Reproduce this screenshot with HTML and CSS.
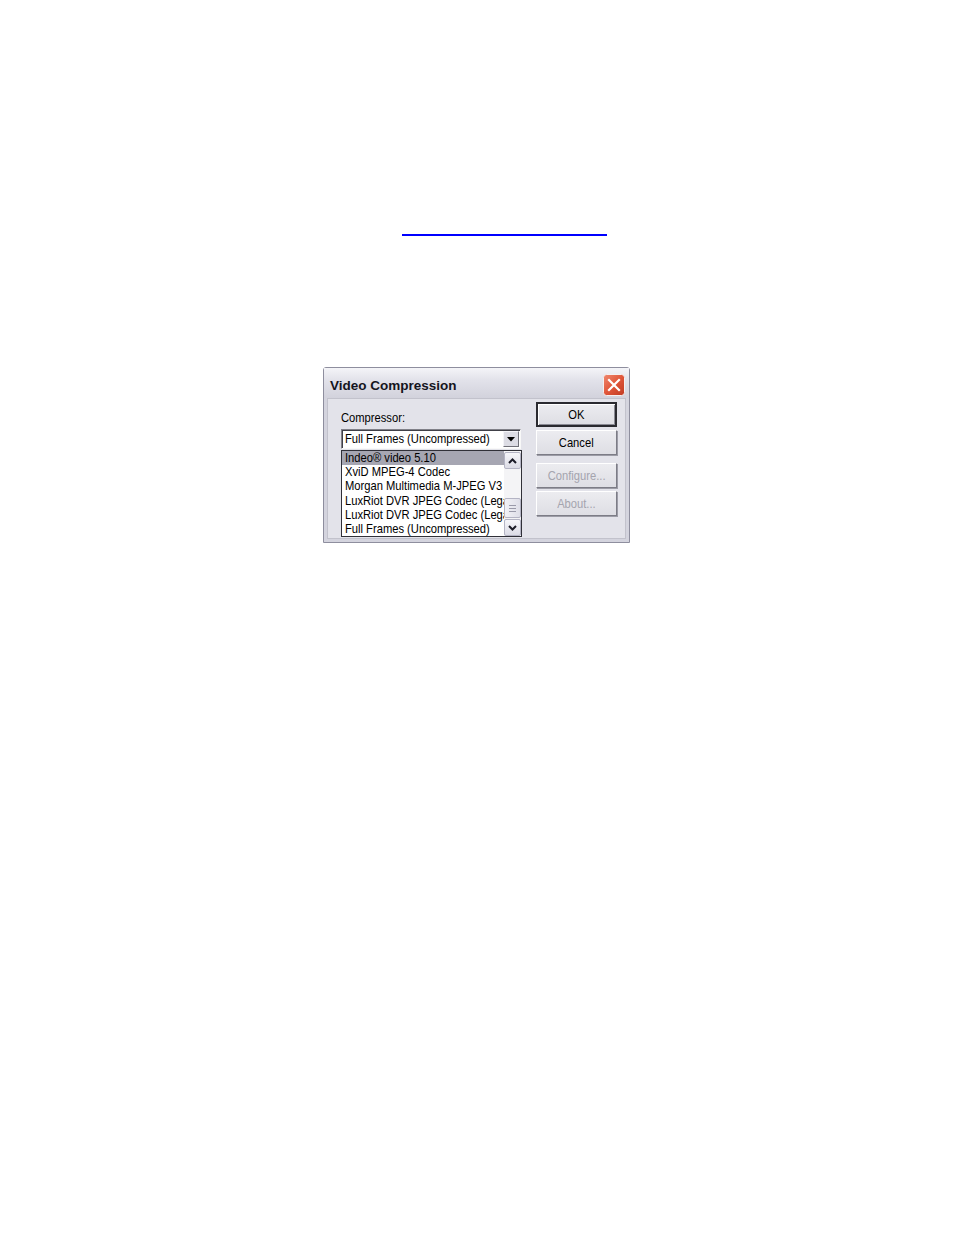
FILE: index.html
```html
<!DOCTYPE html>
<html>
<head>
<meta charset="utf-8">
<title>Video Compression</title>
<link rel="stylesheet" href="styles.css">
</head>
<body>
<div class="rule"></div>
<div class="dialog">
  <div class="titlebar">
    <span class="title">Video Compression</span>
    <span class="close">
      <svg width="22" height="22" viewBox="0 0 22 22">
        <defs>
          <linearGradient id="rg" x1="0" y1="0" x2="1" y2="1">
            <stop offset="0" stop-color="#f08a70"/>
            <stop offset="0.5" stop-color="#e0563a"/>
            <stop offset="1" stop-color="#c03a22"/>
          </linearGradient>
        </defs>
        <rect x="0.5" y="0.5" width="21" height="21" rx="3" fill="url(#rg)" stroke="#f4f0f0" stroke-width="1"/>
        <path d="M6 6 L16 16 M16 6 L6 16" stroke="#ffffff" stroke-width="2.2" stroke-linecap="square"/>
      </svg>
    </span>
  </div>
  <div class="body">
    <div class="left">
      <div class="label"><span class="t">Compressor:</span></div>
      <div class="combo">
        <span class="combo-text"><span class="t">Full Frames (Uncompressed)</span></span>
        <span class="combo-btn">
          <svg width="8" height="5" viewBox="0 0 8 5"><path d="M0 0 H8 L4 4.5 Z" fill="#000"/></svg>
        </span>
      </div>
      <div class="list">
        <div class="items">
          <div class="row sel"><span class="t">Indeo® video 5.10</span></div>
          <div class="row"><span class="t">XviD MPEG-4 Codec</span></div>
          <div class="row"><span class="t">Morgan Multimedia M-JPEG V3</span></div>
          <div class="row"><span class="t">LuxRiot DVR JPEG Codec (Legacy)</span></div>
          <div class="row"><span class="t">LuxRiot DVR JPEG Codec (Legacy)</span></div>
          <div class="row"><span class="t">Full Frames (Uncompressed)</span></div>
        </div>
        <div class="scroll">
          <div class="sbtn">
            <svg width="9" height="6" viewBox="0 0 9 6"><path d="M1 5 L4.5 1.5 L8 5" fill="none" stroke="#1c1c28" stroke-width="2"/></svg>
          </div>
          <div class="track">
            <div class="thumb">
              <span class="grip"></span><span class="grip"></span><span class="grip"></span>
            </div>
          </div>
          <div class="sbtn">
            <svg width="9" height="6" viewBox="0 0 9 6"><path d="M1 1 L4.5 4.5 L8 1" fill="none" stroke="#1c1c28" stroke-width="2"/></svg>
          </div>
        </div>
      </div>
    </div>
    <div class="right">
      <div class="btn default"><span class="t">OK</span></div>
      <div class="btn"><span class="t">Cancel</span></div>
      <div class="btn disabled gap"><span class="t">Configure...</span></div>
      <div class="btn disabled"><span class="t">About...</span></div>
    </div>
  </div>
</div>
</body>
</html>
```

FILE: styles.css
```css
body {
  margin: 0;
  background: #ffffff;
  font-family: "Liberation Sans", Arial, sans-serif;
  color: #000;
}

.t {
  display: inline-block;
  white-space: nowrap;
  transform: scaleX(0.86);
  transform-origin: left center;
}

.rule {
  margin: 234px 0 0 402px;
  width: 205px;
  height: 2px;
  background: #0000ff;
}

.dialog {
  margin: 131px 0 0 323px;
  width: 307px;
  height: 176px;
  box-sizing: border-box;
  border: 1px solid #8e8e9e;
  border-radius: 3px 3px 0 0;
  background: #d4d4de;
  display: flex;
  flex-direction: column;
}

.titlebar {
  height: 30px;
  flex: none;
  display: flex;
  justify-content: space-between;
  align-items: center;
  padding: 0 4px 0 6px;
  background: linear-gradient(#f4f4f8 0%, #e2e2ea 40%, #d2d2dc 100%);
}

.title {
  font-weight: bold;
  font-size: 13.5px;
  color: #141420;
  padding-top: 5px;
}

.close {
  width: 22px;
  height: 22px;
  align-self: flex-end;
  margin-bottom: 2px;
}

.close svg {
  display: block;
}

.body {
  flex: 1;
  margin: 0 3px 3px;
  background: #e3e3ea;
  border: 1px solid #c2c2cc;
  display: flex;
  gap: 14px;
  padding: 3px 0 0 13px;
}

.left {
  width: 181px;
  display: flex;
  flex-direction: column;
}

.label {
  margin-top: 8px;
  font-size: 13px;
  line-height: 15px;
  height: 15px;
}

.combo {
  margin-top: 4px;
  width: 180px;
  height: 20px;
  box-sizing: border-box;
  border: 1px solid;
  border-color: #808088 #f8f8f8 #f8f8f8 #808088;
  box-shadow: inset 1px 1px 0 #404048;
  background: #ffffff;
  display: flex;
  align-items: center;
  justify-content: space-between;
  padding-left: 3px;
  overflow: hidden;
}

.combo-text {
  font-size: 13px;
  line-height: 16px;
  flex: 1;
  overflow: hidden;
}

.combo-btn {
  flex: none;
  width: 16px;
  height: 16px;
  box-sizing: border-box;
  border: 1px solid;
  border-color: #f4f4f8 #707078 #707078 #f4f4f8;
  background: #dcdce4;
  display: flex;
  align-items: center;
  justify-content: center;
  margin-right: 1px;
}

.combo-btn svg {
  display: block;
}

.list {
  margin-top: 1px;
  width: 181px;
  height: 87px;
  box-sizing: border-box;
  border: 1px solid #303038;
  background: #ffffff;
  display: flex;
}

.items {
  width: 162px;
  overflow: hidden;
}

.row {
  height: 14.2px;
  line-height: 14.2px;
  font-size: 13px;
  padding-left: 3px;
  white-space: nowrap;
  overflow: hidden;
}

.row.sel {
  background: #a6a6b2;
}

.scroll {
  width: 17px;
  display: flex;
  flex-direction: column;
  background: #f4f4f6;
  padding-top: 1px;
}

.sbtn {
  height: 17px;
  box-sizing: border-box;
  border: 1px solid #b4b4c4;
  border-radius: 2px;
  background: linear-gradient(#f6f6fa, #dcdce6);
  display: flex;
  align-items: center;
  justify-content: center;
}

.sbtn svg {
  display: block;
}

.track {
  flex: 1;
  display: flex;
  flex-direction: column;
  justify-content: flex-end;
  padding-bottom: 1px;
}

.thumb {
  height: 20px;
  box-sizing: border-box;
  border: 1px solid #b4b4c4;
  border-radius: 2px;
  background: linear-gradient(90deg, #f2f2f6, #dedee8);
  display: flex;
  flex-direction: column;
  align-items: center;
  justify-content: center;
  gap: 2px;
}

.grip {
  width: 7px;
  height: 1px;
  background: #9a9aaa;
}

.right {
  width: 81px;
  display: flex;
  flex-direction: column;
}

.btn {
  height: 25px;
  box-sizing: border-box;
  border: 1px solid;
  border-color: #ffffff #7c7c86 #7c7c86 #ffffff;
  box-shadow: 1px 1px 0 #9c9ca6;
  background: linear-gradient(#ececf0, #dedee4);
  font-size: 13px;
  display: flex;
  align-items: center;
  justify-content: center;
  margin-top: 3px;
}

.btn .t {
  transform-origin: center center;
}

.btn.default {
  margin-top: 0;
  border: 2px solid #2a2a30;
  box-shadow: inset 1px 1px 0 #ffffff, inset -1px -1px 0 #8a8a94;
}

.btn.gap {
  margin-top: 8px;
}

.btn.disabled {
  color: #a4a4ae;
}
```
